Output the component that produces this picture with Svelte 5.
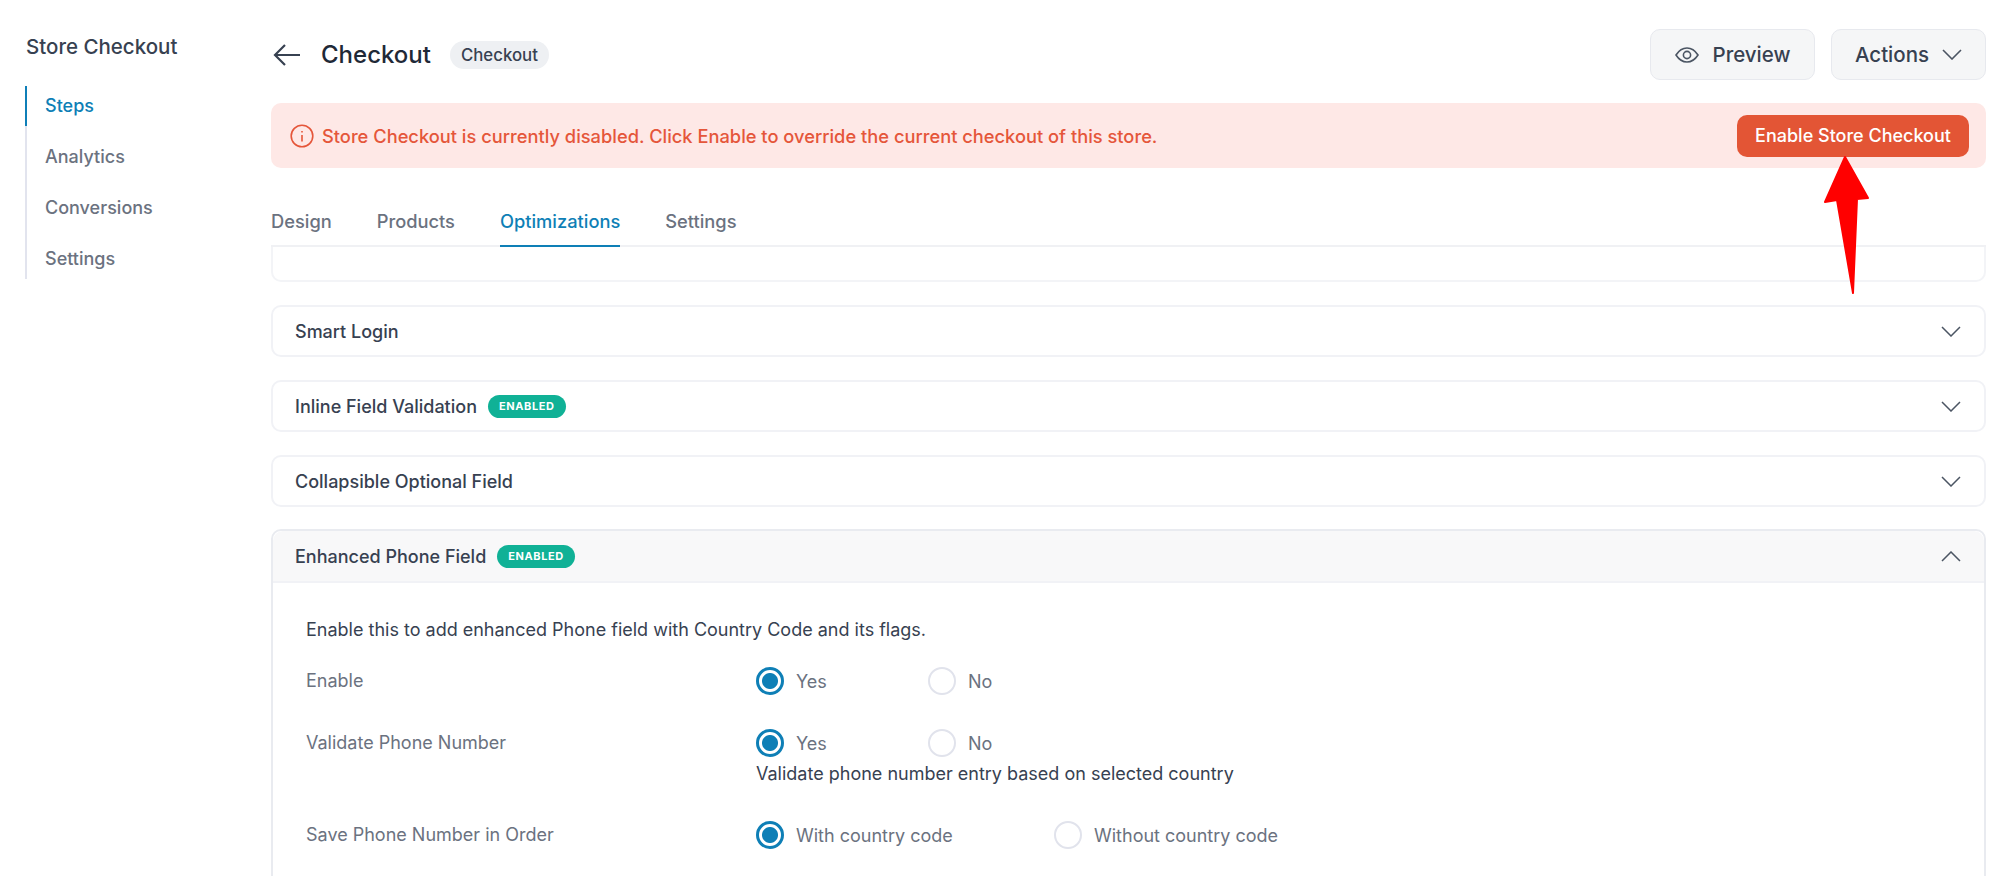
<script>
  const navItems = ['Steps', 'Analytics', 'Conversions', 'Settings'];
  const tabs = ['Design', 'Products', 'Optimizations', 'Settings'];
  const collapsed = [
    { name: 'Smart Login', enabled: false },
    { name: 'Inline Field Validation', enabled: true },
    { name: 'Collapsible Optional Field', enabled: false }
  ];
  const fields = [
    { label: 'Enable', options: ['Yes', 'No'] },
    { label: 'Validate Phone Number', options: ['Yes', 'No'], help: 'Validate phone number entry based on selected country' },
    { label: 'Save Phone Number in Order', options: ['With country code', 'Without country code'], wide: true }
  ];
</script>

<div class="page">
  <aside class="sidebar">
    <div class="side-title">Store Checkout</div>
    <nav class="side-nav">
      {#each navItems as item, i}
        <div class="side-link" class:active={i === 0}>{item}</div>
      {/each}
    </nav>
  </aside>

  <main class="main">
    <header class="top">
      <svg class="back" width="28" height="24" viewBox="0 0 28 24" fill="none" stroke="#374151" stroke-width="2.2">
        <path d="M27 12H2M12 2 2 12l10 10" />
      </svg>
      <h1>Checkout</h1>
      <span class="pill">Checkout</span>
      <div class="top-actions">
        <button class="ghost preview">
          <svg width="24" height="16" viewBox="0 0 24 16" fill="none" stroke="#4b5563" stroke-width="1.6">
            <path d="M1 8c3-4.700 6.700-7 11-7s8 2.300 11 7c-3 4.700-6.700 7-11 7S4 12.700 1 8Z" />
            <circle cx="12" cy="8" r="3.600" />
          </svg>
          Preview
        </button>
        <button class="ghost actions">
          Actions
          <svg width="20" height="11" viewBox="0 0 20 11" fill="none" stroke="#4b5563" stroke-width="1.6">
            <path d="m1 1 9 9 9-9" />
          </svg>
        </button>
      </div>
    </header>

    <div class="banner">
      <svg width="24" height="24" viewBox="0 0 24 24" fill="none" stroke="#e5563a" stroke-width="1.6">
        <circle cx="12" cy="12" r="10.800" />
        <path d="M12 11v6.500M12 7v1.500" />
      </svg>
      <span class="banner-text">Store Checkout is currently disabled. Click Enable to override the current checkout of this store.</span>
      <button class="enable">Enable Store Checkout</button>
    </div>

    <div class="tabs">
      {#each tabs as tab, i}
        <div class="tab" class:active={i === 2}>{tab}</div>
      {/each}
    </div>

    <div class="stub"></div>

    <div class="cards">
      {#each collapsed as card}
        <div class="card">
          <div class="card-head">
            <span class="card-name">{card.name}</span>
            {#if card.enabled}<span class="badge">ENABLED</span>{/if}
            <svg class="chev" width="20" height="11" viewBox="0 0 20 11" fill="none" stroke="#4b5563" stroke-width="1.500">
              <path d="m1 1 9 9 9-9" />
            </svg>
          </div>
        </div>
      {/each}

      <div class="card open">
        <div class="card-head">
          <span class="card-name">Enhanced Phone Field</span>
          <span class="badge">ENABLED</span>
          <svg class="chev" width="20" height="11" viewBox="0 0 20 11" fill="none" stroke="#4b5563" stroke-width="1.500">
            <path d="m1 10 9-9 9 9" />
          </svg>
        </div>
        <div class="card-body">
          <p class="desc">Enable this to add enhanced Phone field with Country Code and its flags.</p>
          {#each fields as field}
            <div class="field">
              <div class="field-label">{field.label}</div>
              <div class="field-value">
                <div class="radios" class:wide={field.wide}>
                  {#each field.options as opt, i}
                    <div class="radio-item">
                      <span class="radio" class:on={i === 0}></span>
                      <span class="radio-label">{opt}</span>
                    </div>
                  {/each}
                </div>
                {#if field.help}<div class="help">{field.help}</div>{/if}
              </div>
            </div>
          {/each}
        </div>
      </div>
    </div>
  </main>

  <svg class="red-arrow" width="50" height="142" viewBox="0 0 50 142" fill="#ff0000" stroke="#ff0000" stroke-width="2" stroke-linejoin="round">
    <path d="M24 2 4 47l12-2 16 93 4-94 11-1Z" />
  </svg>
</div>

<style>
  :global(body) {
    margin: 0;
    background: #fff;
  }

  .page {
    position: relative;
    display: flex;
    height: 876px;
    overflow: hidden;
    font-family: Inter, "Liberation Sans", sans-serif;
    color: #374151;
  }

  .sidebar {
    width: 271px;
    flex: none;
    box-sizing: border-box;
    padding: 35px 0 0 25px;
  }

  .side-title {
    margin-left: 1px;
    font-size: 20.5px;
    font-weight: 500;
    line-height: 24px;
  }

  .side-nav {
    margin-top: 27px;
    border-left: 2px solid #e2e4ee;
  }

  .side-link {
    height: 51px;
    line-height: 40px;
    padding: 0 0 0 18px;
    margin-left: -2px;
    border-left: 2px solid transparent;
    font-size: 18px;
    font-weight: 500;
    color: #6b7280;
  }

  .side-link:last-child {
    height: 40px;
  }

  .side-link:first-child {
    height: 40px;
    margin-bottom: 11px;
    border-left-color: #0f7fb8;
    color: #0e7fb6;
  }

  .main {
    flex: 1;
    min-width: 0;
    padding: 29px 13px 0 0;
  }

  .top {
    display: flex;
    align-items: center;
    height: 51px;
    margin-bottom: 23px;
  }

  .back {
    margin: 0 20px 0 2px;
  }

  h1 {
    margin: 0 19px 0 0;
    font-size: 24px;
    font-weight: 500;
    color: #1f2937;
  }

  .pill {
    padding: 0 11px;
    height: 28px;
    line-height: 28px;
    border-radius: 14px;
    background: #eef0f3;
    font-size: 16.800px;
    font-weight: 500;
  }

  .top-actions {
    margin-left: auto;
    display: flex;
    gap: 16px;
  }

  .ghost {
    display: flex;
    align-items: center;
    justify-content: center;
    height: 51px;
    box-sizing: border-box;
    background: #f5f6f7;
    border: 1px solid #e7e9ee;
    border-radius: 10px;
    font: 500 20.5px Inter, "Liberation Sans", sans-serif;
    color: #374151;
  }

  .preview {
    width: 165px;
    gap: 14px;
  }

  .actions {
    width: 155px;
    gap: 13px;
  }

  .banner {
    display: flex;
    align-items: center;
    height: 65px;
    padding: 0 17px 0 19px;
    border-radius: 10px;
    background: #fee8e6;
  }

  .banner-text {
    margin-left: 8px;
    font-size: 18.300px;
    font-weight: 500;
    color: #e5563a;
  }

  .enable {
    margin-left: auto;
    width: 232px;
    height: 42px;
    border: none;
    border-radius: 10px;
    background: #e35535;
    color: #fff;
    font: 500 18px Inter, "Liberation Sans", sans-serif;
  }

  .tabs {
    display: flex;
    gap: 45px;
    margin-top: 35px;
    height: 42px;
    border-bottom: 2px solid #f0f1f4;
  }

  .tab {
    height: 42px;
    line-height: 36px;
    font-size: 18.300px;
    font-weight: 500;
    color: #6b7280;
  }

  .tab.active {
    color: #0e7fb6;
    border-bottom: 2px solid #0e7fb6;
  }

  .stub {
    height: 33px;
    border: 2px solid #f3f4f7;
    border-top: none;
    border-radius: 0 0 10px 10px;
  }

  .cards {
    display: flex;
    flex-direction: column;
    gap: 23px;
    margin-top: 23px;
  }

  .card {
    border: 2px solid #f1f2f6;
    border-radius: 10px;
  }

  .card-head {
    display: flex;
    align-items: center;
    height: 48px;
    padding: 0 23px 0 22px;
  }

  .card-name {
    font-size: 18px;
    font-weight: 500;
  }

  .badge {
    margin-left: 11px;
    height: 23px;
    line-height: 23px;
    padding: 0 11px;
    border-radius: 12px;
    background: #10b196;
    color: #fff;
    font-size: 11px;
    font-weight: 700;
    letter-spacing: 0.6px;
  }

  .chev {
    margin-left: auto;
  }

  .open {
    margin-top: -1px;
    border-color: #e9ebf0;
    height: 700px;
  }

  .open .card-head {
    background: #f8f8f9;
    border-radius: 10px 10px 0 0;
    border-bottom: 2px solid #f1f2f6;
    height: 50px;
  }

  .card-body {
    padding: 35px 0 0 33px;
  }

  .desc {
    margin: 0;
    font-size: 18px;
    line-height: 24px;
    color: #374151;
  }

  .field {
    display: flex;
    margin-top: 25px;
    min-height: 30px;
  }

  .field + .field {
    margin-top: 32px;
  }

  .field:last-child {
    margin-top: 35px;
  }

  .field-label {
    width: 450px;
    flex: none;
    line-height: 28px;
    font-size: 18px;
    color: #6b7280;
  }

  .radios {
    display: flex;
  }

  .radio-item {
    display: flex;
    align-items: center;
    gap: 12px;
    width: 172px;
  }

  .wide .radio-item {
    width: 298px;
  }

  .radio {
    width: 28px;
    height: 28px;
    box-sizing: border-box;
    border: 2px solid #e1e3ec;
    border-radius: 50%;
    display: block;
    flex: none;
  }

  .radio.on {
    border: 3px solid #0e7fb6;
    background: radial-gradient(circle, #0e7fb6 0 7.500px, #fff 8.500px);
  }

  .radio-label {
    font-size: 18px;
    color: #6b7280;
  }

  .help {
    margin-top: 5px;
    font-size: 18px;
    line-height: 24px;
    color: #374151;
  }

  .red-arrow {
    position: absolute;
    left: 1821px;
    top: 155px;
  }
</style>
